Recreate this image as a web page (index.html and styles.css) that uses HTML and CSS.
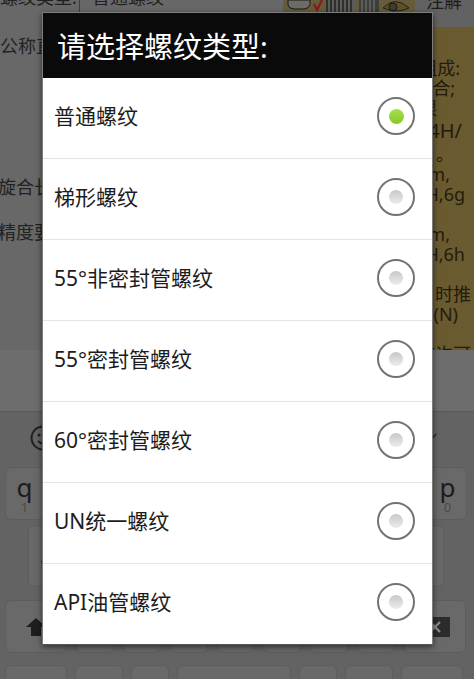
FILE: index.html
```html
<!DOCTYPE html>
<html lang="zh">
<head>
<meta charset="utf-8">
<title>请选择螺纹类型</title>
<link rel="stylesheet" href="styles.css">
</head>
<body>
<div class="screen">
  <div class="page">
    <div class="form">
      <div class="field first"><span class="label">螺纹类型:</span><span class="value">普通螺纹</span></div>
      <div class="field second"><span class="label">公称直径</span></div>
      <div class="field"><span class="label shift">旋合长度</span></div>
      <div class="field"><span class="label shift">精度要求</span></div>
    </div>
    <div class="side">
      <div class="side-head">
        <div class="strip">
          <svg width="132" height="13" viewBox="0 0 132 13">
            <rect width="132" height="13" fill="#665c3c"/>
            <path d="M5 0h22v5q-2 4-6 4H11q-5 0-6-4z" fill="#6e6c66" stroke="#181818"/>
            <path d="M31 4l3 6 5-10" fill="none" stroke="#8a1818" stroke-width="2"/>
            <path d="M42 0h30v13H42z" fill="#5c5c58"/>
            <path d="M44 0v13M48 0v13M52 0v13M56 0v13M60 0v13M64 0v13M68 0v13" stroke="#262626" stroke-width="1.6"/>
            <path d="M76 0h20v13H76z" fill="#3e3e3c"/>
            <path d="M79 0v13M83 0v13M87 0v13M91 0v13" stroke="#66665f" stroke-width="1.6"/>
            <path d="M100 8q12-13 26 0q-12 6-26 0z" fill="#615320" stroke="#222"/>
            <circle cx="110" cy="7" r="4" fill="#3e3e36" stroke="#161616"/>
          </svg>
        </div>
        <div class="note">注解</div>
      </div>
      <div class="lines">
        <div class="line p14">* 普通螺纹的组成:</div>
        <div class="line p19">合;</div>
        <div class="line p37">限</div>
        <div class="line big p12">4H/</div>
        <div class="line p20">。</div>
        <div class="line p24">m,</div>
        <div class="line p9">H,6g</div>
        <div class="line gap p24">m,</div>
        <div class="line p9">H,6h</div>
        <div class="line gap p3">时推</div>
        <div class="line p16">(N)</div>
        <div class="line gap p3">(许可</div>
      </div>
    </div>
  </div>

  <div class="keyboard">
    <div class="band"></div>
    <div class="tools">
      <svg class="smile" width="26" height="26" viewBox="0 0 26 26">
        <circle cx="13" cy="13" r="11.5" fill="none" stroke="#222" stroke-width="2"/>
        <circle cx="9" cy="10" r="1.6" fill="#222"/>
        <circle cx="17" cy="10" r="1.6" fill="#222"/>
        <path d="M8 16q5 5 10 0" fill="none" stroke="#222" stroke-width="2"/>
      </svg>
      <svg class="chev" width="18" height="12" viewBox="0 0 18 12"><path d="M2 2l7 8 7-8" fill="none" stroke="#2a2a2a" stroke-width="1.6"/></svg>
    </div>
    <div class="row r1">
      <div class="key"><b>q</b><i>1</i></div><div class="key"><b>w</b><i>2</i></div><div class="key"><b>e</b><i>3</i></div><div class="key"><b>r</b><i>4</i></div><div class="key"><b>t</b><i>5</i></div><div class="key"><b>y</b><i>6</i></div><div class="key"><b>u</b><i>7</i></div><div class="key"><b>i</b><i>8</i></div><div class="key"><b>o</b><i>9</i></div><div class="key"><b>p</b><i>0</i></div>
    </div>
    <div class="row r2">
      <div class="key"><b>a</b></div><div class="key"><b>s</b></div><div class="key"><b>d</b></div><div class="key"><b>f</b></div><div class="key"><b>g</b></div><div class="key"><b>h</b></div><div class="key"><b>j</b></div><div class="key"><b>k</b></div><div class="key"><b>l</b></div>
    </div>
    <div class="row r3">
      <div class="key wide"><svg width="20" height="18" viewBox="0 0 20 18"><path d="M10 0L0 9h5v9h10V9h5z" fill="#1e1e1e"/></svg></div>
      <div class="key"><b>z</b></div><div class="key"><b>x</b></div><div class="key"><b>c</b></div><div class="key"><b>v</b></div><div class="key"><b>b</b></div><div class="key"><b>n</b></div><div class="key"><b>m</b></div>
      <div class="key wide"><svg class="del" width="38" height="20" viewBox="0 0 38 20"><path d="M9 0h29v20H9L0 10z" fill="#2c2c2c"/><path d="M18 5l10 10M28 5L18 15" stroke="#8a8a8a" stroke-width="2.4"/></svg></div>
    </div>
    <div class="row r4">
      <div class="key wide"></div><div class="key w48"></div><div class="key"></div><div class="key space"></div><div class="key"></div><div class="key w48"></div><div class="key wide"></div>
    </div>
  </div>

  <div class="dialog">
    <div class="title">请选择螺纹类型:</div>
    <div class="option"><span class="name">普通螺纹</span><span class="radio on"></span></div>
    <div class="option"><span class="name">梯形螺纹</span><span class="radio"></span></div>
    <div class="option"><span class="name">55°非密封管螺纹</span><span class="radio"></span></div>
    <div class="option"><span class="name">55°密封管螺纹</span><span class="radio"></span></div>
    <div class="option"><span class="name">60°密封管螺纹</span><span class="radio"></span></div>
    <div class="option"><span class="name">UN统一螺纹</span><span class="radio"></span></div>
    <div class="option"><span class="name">API油管螺纹</span><span class="radio"></span></div>
  </div>
</div>
</body>
</html>
```
FILE: styles.css
```css
* { box-sizing: border-box; }
html, body { margin: 0; padding: 0; }
body { background: #000; font-family: "Noto Sans", "Noto Sans CJK SC", sans-serif; }

.screen {
  position: relative;
  width: 474px;
  height: 679px;
  overflow: hidden;
  background: #686868;
}

/* Page under the dialog */
.page { display: flex; height: 350px; overflow: hidden; }
.form { width: 283px; flex: none; color: #222; font-size: 18px; }
.field { display: flex; height: 45px; line-height: 26px; white-space: nowrap; }
.field.first { margin-top: -21px; height: 54px; padding-top: 5px; }
.field.second { height: 141px; }
.label { width: 80px; flex: none; }
.label.shift { margin-left: -2px; }
.first .label { border-right: 1px solid #3e3e3e; height: 40px; }
.value { padding-left: 12px; }
.side { flex: 1; background: #6a5a30; display: flex; flex-direction: column; min-width: 0; color: #221c0c; }
.side-head { display: flex; flex: none; height: 27px; }
.strip { width: 132px; height: 13px; flex: none; overflow: hidden; }
.strip svg { display: block; }
.note {
  flex: 1;
  background: #626262;
  border-bottom-left-radius: 8px;
  font-size: 18px;
  line-height: 18px;
  margin-top: -8px;
  height: 35px;
  padding-left: 11px;
  color: #1c1c1c;
}
.lines { font-size: 18px; line-height: 20px; text-align: right; padding-top: 31px; white-space: nowrap; }
.line { height: 20px; }
.line.big { font-size: 20px; height: 26px; line-height: 26px; }
.line.gap { margin-top: 20px; }
.p3 { padding-right: 3px; }
.p9 { padding-right: 9px; }
.p12 { padding-right: 12px; }
.p14 { padding-right: 14px; }
.p16 { padding-right: 16px; }
.p19 { padding-right: 19px; }
.p20 { padding-right: 20px; }
.p24 { padding-right: 24px; }
.p37 { padding-right: 37px; }

/* Keyboard under the dialog */
.keyboard { height: 329px; background: #636363; display: flex; flex-direction: column; }
.band { height: 62px; flex: none; background: #6d6d6d; border-bottom: 1px solid #585858; }
.tools { height: 55px; flex: none; display: flex; justify-content: space-between; align-items: center; padding: 0 36px 4px 30px; }
.row { display: flex; flex: none; gap: 8px; }
.key {
  flex: 1;
  min-width: 0;
  background: #696969;
  border: 1px solid #5d5d5d;
  border-radius: 6px;
  display: flex;
  flex-direction: column;
  align-items: center;
  justify-content: center;
  color: #1c1c1c;
}
.key b { font-weight: 400; font-size: 26px; line-height: 26px; }
.key i { font-style: normal; font-size: 13px; line-height: 14px; color: #4a4a4a; }
.r1 { height: 53px; padding: 0 7px 0 5px; }
.r2 { height: 62px; margin-top: 5px; padding: 0 30px 0 28px; }
.r3 { height: 53px; margin-top: 13px; padding: 0 8px 0 5px; gap: 9px; }
.r4 { height: 53px; margin-top: 12px; padding: 0 8px 0 5px; }
.r3 .wide { flex: 0 0 62px; }
.r4 .key { flex: 0 0 38px; }
.r4 .key.wide { flex-basis: 62px; }
.r4 .key.w48 { flex-basis: 48px; }
.r4 .key.space { flex-basis: 114px; }
.del { margin-left: -8px; }

/* Dialog */
.dialog {
  position: absolute;
  left: 42px;
  top: 12px;
  width: 391px;
  height: 633px;
  display: flex;
  flex-direction: column;
  background: #fff;
  border: 1px solid #7d7d7d;
  border-bottom-color: #555;
  box-shadow: 0 2px 6px rgba(0, 0, 0, .55);
}
.title {
  flex: none;
  height: 65px;
  background: rgba(0, 0, 0, .96);
  color: #fff;
  font-size: 29px;
  line-height: 68px;
  padding-left: 14px;
  white-space: nowrap;
}
.option {
  flex: 1;
  display: flex;
  align-items: center;
  justify-content: space-between;
  padding: 0 17px 4px 11px;
  color: #1c1c1c;
  font-size: 21px;
  border-bottom: 1px solid #e4e4e4;
}
.option:last-child { border-bottom: 0; }
.name { margin-bottom: 2px; }
.radio {
  width: 38px;
  height: 38px;
  border: 2px solid #737373;
  border-radius: 50%;
  background: #fff;
  display: flex;
  align-items: center;
  justify-content: center;
}
.radio::after {
  content: "";
  width: 14px;
  height: 14px;
  border-radius: 50%;
  background: linear-gradient(#c8c8c8, #ececec);
}
.radio.on::after { background: linear-gradient(#a4e04a, #86c92a); width: 15px; height: 15px; }
```
